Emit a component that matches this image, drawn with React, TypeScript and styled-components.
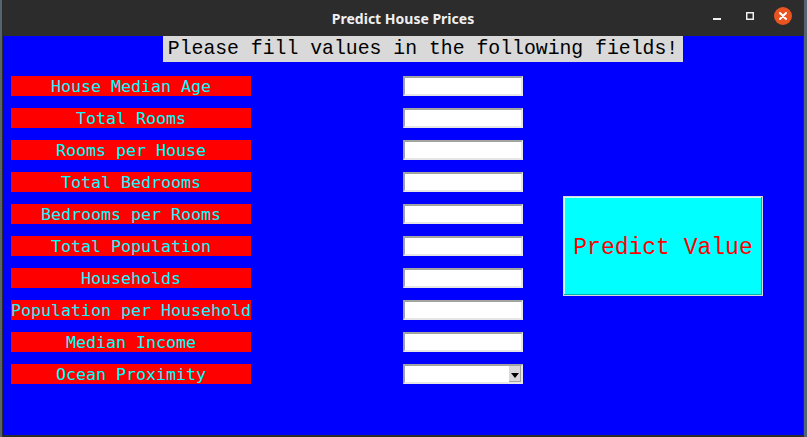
import React from "react";
import styled, { createGlobalStyle } from "styled-components";

const GlobalStyle = createGlobalStyle`
  html, body {
    margin: 0;
    padding: 0;
    background: #56646f;
  }
  body {
    width: 807px;
    height: 437px;
    overflow: hidden;
  }
`;

const Window = styled.div`
  margin-left: 2px;
  width: 802px;
  height: 437px;
  display: flex;
  flex-direction: column;
  background: #2c2c2c;
  box-sizing: border-box;
  border-left: 1px solid #2c2c2c;
  border-right: 1px solid #2c2c2c;
  border-bottom: 2px solid #2c2c2c;
`;

const TitleBar = styled.div`
  height: 36px;
  flex: none;
  position: relative;
  display: flex;
  align-items: center;
  justify-content: center;
  background: #2c2c2c;
  color: #f0f0f0;
  font-family: "Noto Sans", "DejaVu Sans", sans-serif;
  font-weight: 700;
  font-size: 14px;
`;

const WindowButtons = styled.div`
  position: absolute;
  right: 11px;
  top: 7px;
  display: flex;
  align-items: center;
  gap: 15px;
`;

const CtlButton = styled.div`
  width: 18px;
  height: 18px;
  display: flex;
  align-items: center;
  justify-content: center;
`;

const CloseButton = styled(CtlButton)`
  border-radius: 50%;
  background: #e95420;
`;

const Content = styled.div`
  flex: 1;
  background: #0000ff;
  display: flex;
  flex-direction: column;
`;

const Header = styled.div`
  margin-left: 160px;
  width: 520px;
  height: 26px;
  background: #d9d9d9;
  color: #000;
  font-family: "Liberation Mono", "DejaVu Sans Mono", monospace;
  font-size: 19.8px;
  line-height: 27px;
  text-align: center;
  white-space: nowrap;
`;

const Form = styled.div`
  margin-top: 14px;
  margin-left: 8px;
  display: grid;
  grid-template-columns: 392px 160px 200px;
  grid-auto-rows: 20px;
  row-gap: 12px;
`;

const Label = styled.div`
  grid-column: 1;
  width: 240px;
  height: 20px;
  background: #ff0000;
  color: #00ffff;
  font-family: "DejaVu Sans Mono", "Liberation Mono", monospace;
  font-size: 16.6px;
  line-height: 21px;
  text-align: center;
  white-space: nowrap;
  overflow: hidden;
`;

const Field = styled.input`
  grid-column: 2;
  width: 120px;
  height: 20px;
  box-sizing: border-box;
  margin: 0;
  padding: 0 2px;
  background: #ffffff;
  border: 2px solid;
  border-color: #a3a3a3 #e6e6e6 #e6e6e6 #a3a3a3;
  outline: none;
  font-family: "Liberation Mono", monospace;
  font-size: 13px;
`;

const Combo = styled.div`
  grid-column: 2;
  width: 120px;
  height: 20px;
  box-sizing: border-box;
  background: #ffffff;
  border: 2px solid;
  border-color: #a3a3a3 #e6e6e6 #e6e6e6 #a3a3a3;
  display: flex;
  justify-content: flex-end;
`;

const ComboArrow = styled.div`
  width: 12px;
  height: 16px;
  box-sizing: border-box;
  background: #d9d9d9;
  border-right: 1px solid #a3a3a3;
  border-bottom: 1px solid #a3a3a3;
  display: flex;
  align-items: center;
  justify-content: center;
  padding-top: 3px;
`;

const PredictButton = styled.button`
  grid-column: 3;
  grid-row: 4 / span 5;
  align-self: center;
  width: 200px;
  height: 100px;
  margin: 0;
  padding: 4px 0 0;
  box-sizing: border-box;
  background: #00ffff;
  border: 1px solid #d9d9d9;
  box-shadow: inset -1px -1px 0 #00b0b0, inset 1px 1px 0 #c8ffff;
  color: #ff0000;
  font-family: "Liberation Mono", "DejaVu Sans Mono", monospace;
  font-size: 23px;
  cursor: pointer;
`;

const fields = [
  "House Median Age",
  "Total Rooms",
  "Rooms per House",
  "Total Bedrooms",
  "Bedrooms per Rooms",
  "Total Population",
  "Households",
  "Population per Household",
  "Median Income",
];

const App: React.FC = () => {
  return (
    <>
      <GlobalStyle />
      <Window>
        <TitleBar>
          Predict House Prices
          <WindowButtons>
            <CtlButton>
              <svg width="10" height="10" viewBox="0 0 10 10">
                <rect x="1" y="7" width="8" height="2" fill="#f0f0f0" />
              </svg>
            </CtlButton>
            <CtlButton>
              <svg width="10" height="10" viewBox="0 0 10 10">
                <rect x="1.75" y="1.75" width="6.5" height="6.5" fill="none" stroke="#f0f0f0" strokeWidth="1.5" />
              </svg>
            </CtlButton>
            <CloseButton>
              <svg width="10" height="10" viewBox="0 0 10 10">
                <path d="M2 2 L8 8 M8 2 L2 8" stroke="#ffffff" strokeWidth="2" strokeLinecap="round" />
              </svg>
            </CloseButton>
          </WindowButtons>
        </TitleBar>
        <Content>
          <Header>Please fill values in the following fields!</Header>
          <Form>
            {fields.map((name, i) => (
              <React.Fragment key={name}>
                <Label style={{ gridRow: i + 1 }}>{name}</Label>
                <Field style={{ gridRow: i + 1 }} />
              </React.Fragment>
            ))}
            <Label style={{ gridRow: 10 }}>Ocean Proximity</Label>
            <Combo style={{ gridRow: 10 }}>
              <ComboArrow>
                <svg width="8" height="5" viewBox="0 0 8 5">
                  <path d="M0 0 H8 L4 5 Z" fill="#000" />
                </svg>
              </ComboArrow>
            </Combo>
            <PredictButton>Predict Value</PredictButton>
          </Form>
        </Content>
      </Window>
    </>
  );
};

export default App;
